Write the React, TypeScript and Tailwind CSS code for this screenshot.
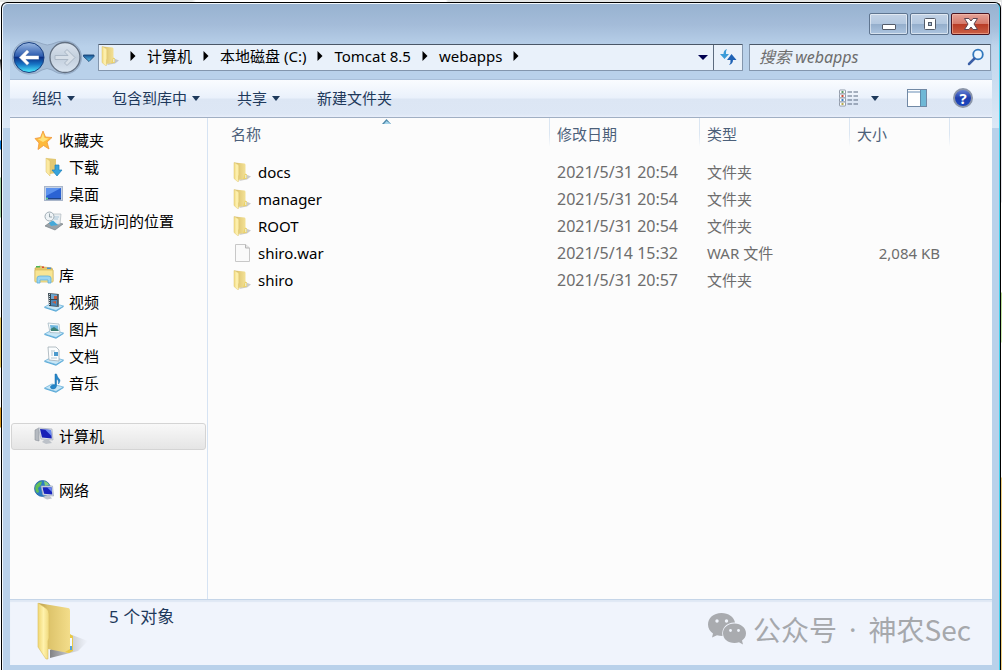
import type { ReactNode } from 'react';

const LargeFolderIcon = () => (
  <svg viewBox="0 0 54 58" className="w-[54px] h-[58px] mt-[2px]">
    <defs>
      <linearGradient id="folderBack" x1="0" x2="1">
        <stop offset="0" stopColor="#b3964a" />
        <stop offset="0.3" stopColor="#dcc269" />
        <stop offset="1" stopColor="#f3dd8a" />
      </linearGradient>
      <linearGradient id="folderFront" x1="0" x2="1">
        <stop offset="0" stopColor="#f0d774" />
        <stop offset="0.5" stopColor="#fff2ac" />
        <stop offset="1" stopColor="#efd87c" />
      </linearGradient>
      <linearGradient id="folderShade" x1="0" x2="1">
        <stop offset="0" stopColor="#666" stopOpacity="0.8" />
        <stop offset="1" stopColor="#999" stopOpacity="0" />
      </linearGradient>
    </defs>
    <path d="M36 33 L52 39 L42 49 L14 56 L14 48 Z" fill="url(#folderShade)" />
    <path d="M2 1 L32 6 Q34 6 34 9 L34 50 L32 51 L12 47 L10 8 Z" fill="url(#folderBack)" />
    <path d="M34 32 L37 34 L37 49 L33 51 L29 50 L34 47 Z" fill="#e9c947" />
    <path d="M34 36 h2 v12 h-2 Z" fill="#f4fafd" />
    <path d="M34 44 h2 v4 h-2 Z" fill="#58a3d8" />
    <path d="M2 1 L11 7 Q13 9 13 12 L13 36 L12 39 L12 57 L10 57 L2 45 Z" fill="url(#folderFront)" stroke="#dcc060" strokeWidth="0.6" />
  </svg>
);

const FolderIcon = () => (
  <svg viewBox="0 0 18 20" className="w-[18px] h-5 shrink-0">
    <defs>
      <linearGradient id="smallBack" x1="0" x2="1">
        <stop offset="0" stopColor="#c3a75a" />
        <stop offset="0.4" stopColor="#e3cb79" />
        <stop offset="1" stopColor="#f3e196" />
      </linearGradient>
      <linearGradient id="smallFront" x1="0" x2="1">
        <stop offset="0" stopColor="#f1da80" />
        <stop offset="0.6" stopColor="#fff3b4" />
        <stop offset="1" stopColor="#f3e08f" />
      </linearGradient>
    </defs>
    <path d="M12 12 L18 14.500 L14 17.500 L6 19 Z" fill="#8d8d8d" opacity="0.45" />
    <path d="M1 0.500 L11.500 1.500 Q12.500 1.600 12.500 3 V17 L5 18 V3 Z" fill="url(#smallBack)" />
    <path d="M12 11.500 L14 12.500 V16.500 L10 17.500 Z" fill="#ecd268" />
    <path d="M12.300 13 H13.300 V16 H12.300 Z" fill="#e8f2f6" />
    <path d="M1 0.500 L5 2.500 Q6 3 6 4.500 V13 L5.500 14 V19.500 L4.500 19.500 L1 16.500 Z" fill="url(#smallFront)" stroke="#dfc670" strokeWidth="0.500" />
  </svg>
);

const FileIcon = () => (
  <svg viewBox="0 0 18 20" className="w-[18px] h-5 shrink-0">
    <path d="M2.500 1.500 H12.500 L16.500 5 V18.500 H2.500 Z" fill="#fafafa" stroke="#c8c8c8" />
    <path d="M12.500 1.500 V5 H16.500" fill="#e6e6e6" stroke="#b5b5b5" />
  </svg>
);

const StarIcon = () => (
  <svg viewBox="0 0 20 20" className="w-5 h-5">
    <path d="M9 1 L11.500 7 L18 7.500 L13 12 L15 19 L9.500 15.500 L4 19.500 L5 13 L1 8.500 L6.500 7.500 Z" fill="#fdb93c" stroke="#f0953a" strokeWidth="0.8" strokeLinejoin="round" />
    <path d="M9 3 L10.500 8 L15 8.500 L9 12 L3.500 9 L7 8.500 Z" fill="#ffe27a" />
  </svg>
);

const DownloadIcon = () => (
  <svg viewBox="0 0 20 20" className="w-5 h-5">
    <path d="M2 1 L12 2 V16 L6 17 Z" fill="#e2c873" />
    <path d="M2 1 L6 4 V19 L2 15 Z" fill="#fbe9a0" stroke="#d9bf69" strokeWidth="0.5" />
    <path d="M11 8 H15 V13 H18 L13 19 L8 13 H11 Z" fill="#36a3dc" stroke="#1d7fb9" strokeWidth="0.7" />
  </svg>
);

const DesktopIcon = () => (
  <svg viewBox="0 0 20 20" className="w-5 h-5">
    <rect x="0.500" y="2.500" width="18" height="14" fill="#c6d3e6" stroke="#a9b6ca" />
    <rect x="2" y="4" width="15" height="11" fill="#2b63d4" />
    <path d="M2 4 H17 L2 12 Z" fill="#5c92ee" />
    <rect x="2" y="14" width="15" height="1.500" fill="#1d4388" />
    <circle cx="3" cy="14.500" r="1" fill="#6ddf8c" />
  </svg>
);

const RecentIcon = () => (
  <svg viewBox="0 0 20 20" className="w-5 h-5">
    <path d="M1 15 L8 10 L19 13 L11 19 Z" fill="#9aa2a8" stroke="#6c757b" strokeWidth="0.6" />
    <path d="M7 3 H17 L16 13 L8 14 Z" fill="#e9eef1" stroke="#b0b9be" strokeWidth="0.7" />
    <path d="M5 12 L9 9.500 L14 14 L7 15 Z" fill="#45a9d9" />
    <path d="M10 6 H15 M10 8 H14" stroke="#a9c7da" />
    <circle cx="5.500" cy="5.500" r="4.500" fill="#eef3f6" stroke="#a0adb5" />
    <path d="M5.500 2.500 V6 H8" fill="none" stroke="#809099" strokeWidth="0.8" />
  </svg>
);

const LibraryIcon = () => (
  <svg viewBox="0 0 20 20" className="w-5 h-5">
    <path d="M1 3 L6 1 L10 2 L18 3 L19 6 V16 H1 Z" fill="#e5c767" stroke="#c3a24a" strokeWidth="0.6" />
    <rect x="2" y="1" width="4" height="1.500" fill="#4eb556" />
    <rect x="8" y="1.500" width="2" height="1.500" fill="#dc4936" />
    <rect x="13" y="2.500" width="4" height="1.500" fill="#4b91d2" />
    <path d="M1 5 H19 V17 H1 Z" fill="#f8e594" stroke="#d6ba5d" strokeWidth="0.7" />
    <path d="M3 18 V13 Q3 11 6 11 H14 Q17 11 17 13 V18 H14 V15 H6 V18 Z" fill="#9bd5f2" stroke="#5eaedb" strokeWidth="0.8" />
  </svg>
);

// Shared light blue tray under each library item
const Tray = ({ children }: { children: ReactNode }) => (
  <svg viewBox="0 0 20 20" className="w-5 h-5">
    <path d="M0.500 15 L8 11 L19.500 14 L12 18.500 Z" fill="#c8e7f7" stroke="#6fb4da" strokeWidth="0.8" />
    <path d="M0.500 15 L12 18.500 L19.500 14 V15 L12 19.800 L0.500 16 Z" fill="#5cabd8" />
    {children}
  </svg>
);

const VideoIcon = () => (
  <Tray>
    <path d="M4 1 L15 2 V15 L5 14 Z" fill="#36454f" />
    <path d="M7 2 L13 2.500 V7 L7 7 Z" fill="#6fa9d3" />
    <path d="M7 8 H13 V14 L7 13.500 Z" fill="#4989ba" />
    <path d="M10 4 L13 4 V7 H10 Z M8 10 L12 9 V12 Z" fill="#c75b3c" />
    <path d="M5.500 2 V14 M14.200 2.500 V15" stroke="#dce4e8" strokeWidth="0.9" strokeDasharray="1 1" />
  </Tray>
);

const PictureIcon = () => (
  <Tray>
    <path d="M4 4 L15 5 L16 14 L6 13.500 Z" fill="#f5fafc" stroke="#9cb1bd" strokeWidth="0.7" />
    <path d="M6 6 L14 6.500 L14.500 12 L7 12 Z" fill="#6fb7df" />
    <path d="M6.500 10 L10 8 L14.500 11 V12 H7 Z" fill="#3b8075" />
  </Tray>
);

const DocumentIcon = () => (
  <Tray>
    <path d="M4 1 H12 L15 4 V15 L5 14 Z" fill="#fbfdfe" stroke="#a1adb5" strokeWidth="0.8" />
    <path d="M7 5 H11 M7 7 H9 M7 9 H9 M7 12 H13" stroke="#b4c6d1" />
    <rect x="10" y="6" width="4" height="4" fill="#4c9acd" />
  </Tray>
);

const MusicIcon = () => (
  <Tray>
    <path d="M11 1 H12.500 Q13 4 16 7 Q16 9 14.500 11 Q15 7 12.500 6 V13 Q12 16 9 16 Q6 15.500 6.500 13.500 Q8 11 11 12 Z" fill="#2587c9" stroke="#1769a8" strokeWidth="0.5" />
  </Tray>
);

const ComputerIcon = () => (
  <svg viewBox="0 0 20 20" className="w-5 h-5">
    <path d="M1 4 L5 2 V15 L1 14 Z" fill="#b4b9c0" stroke="#8b9199" strokeWidth="0.6" />
    <path d="M4.500 2 L18 3 L19 14 L7 13 Z" fill="#dce0e8" stroke="#a6adb9" strokeWidth="0.7" />
    <path d="M6 3 L17 4 L17.800 12.500 L8 11.500 Z" fill="#1720b7" />
    <path d="M11 3.500 L17 4 L17.500 10 Z" fill="#6a8af0" />
    <path d="M10 14 H15 L18 17 L12 18 L8 16 Z" fill="#bcc1c8" />
  </svg>
);

const NetworkIcon = () => (
  <svg viewBox="0 0 20 20" className="w-5 h-5">
    <circle cx="8.500" cy="8.500" r="8" fill="#2c7cc4" stroke="#24619b" strokeWidth="0.7" />
    <path d="M2 5 Q5 1 8 1.500 L7 5 L4 8 L5 12 L3 13 Q0 9 2 5 Z" fill="#62bf57" />
    <path d="M10 1 Q14 2 15 5 L11 6 Z" fill="#84d078" />
    <path d="M7 6 L18.500 6 L19.500 16 L9 15 Z" fill="#dbe0ea" stroke="#9ea7b7" strokeWidth="0.7" />
    <path d="M8.500 7.200 L17.500 7.200 L18.300 14.500 L10 13.800 Z" fill="#1a25bd" />
    <path d="M13 7.200 H17.500 L18 12 Z" fill="#6887ee" />
    <path d="M12 16 H16 L18 18.500 L13 19.500 L9 17.500 Z" fill="#c2c7ce" />
  </svg>
);

const NavButtons = () => (
  <div className="flex items-center relative w-[84px] h-9 shrink-0">
    <svg viewBox="0 0 84 36" className="absolute inset-0 w-[84px] h-9">
      <defs>
        <linearGradient id="navBack" x1="0" y1="0" x2="0" y2="1">
          <stop offset="0" stopColor="#9cb9e2" />
          <stop offset="0.45" stopColor="#2c5cb0" />
          <stop offset="0.5" stopColor="#0b2f86" />
          <stop offset="0.72" stopColor="#1673c4" />
          <stop offset="1" stopColor="#4ff0ff" />
        </linearGradient>
        <linearGradient id="navForward" x1="0" y1="0" x2="0" y2="1">
          <stop offset="0" stopColor="#dbe4ee" />
          <stop offset="0.5" stopColor="#c3cfdd" />
          <stop offset="1" stopColor="#d9e4f0" />
        </linearGradient>
        <linearGradient id="navDown" x1="0" y1="0" x2="0" y2="1">
          <stop offset="0" stopColor="#174f93" />
          <stop offset="1" stopColor="#59c9ef" />
        </linearGradient>
      </defs>
      <path d="M17 2 Q25 2 31 5 Q35 7 40 5 Q46 2 53 2 A16 16 0 0 1 53 35 Q45 35 40 31 Q35 28 30 31 Q25 35 17 35 A16 16 0 0 1 17 2 Z" fill="#a5bcd6" stroke="#93a9c4" />
      <circle cx="17" cy="18.500" r="15" fill="url(#navBack)" stroke="#183e80" />
      <path d="M7 18.500 L15 10.500 L17.500 13 L14 16.500 H27 V20.500 H14 L17.500 24 L15 26.500 Z" fill="#fff" stroke="#2a5499" strokeWidth="0.5" strokeLinejoin="round" />
      <circle cx="53" cy="18.500" r="15" fill="url(#navForward)" stroke="#626f80" strokeWidth="1.300" />
      <path d="M63 18.500 L55 10.500 L52.500 13 L56 16.500 H43 V20.500 H56 L52.500 24 L55 26.500 Z" fill="#d8e0e9" stroke="#aab7c6" strokeLinejoin="round" />
      <path d="M71.500 16 H82 V17.500 L77 22.500 L71.500 17.500 Z" fill="url(#navDown)" stroke="#1c4777" strokeWidth="0.900" />
    </svg>
    <button aria-label="后退" className="relative w-8 h-9 rounded-full" />
    <button aria-label="前进" className="relative w-9 h-9 rounded-full" />
    <button aria-label="最近的页面" className="relative w-4 h-9" />
  </div>
);

const Crumb = ({ label }: { label: string }) => (
  <>
    <svg viewBox="0 0 6 10" className="w-[6px] h-[10px] shrink-0">
      <path d="M0.500 0 L5.500 5 L0.500 10 Z" fill="#000" />
    </svg>
    {label && <button className="whitespace-nowrap">{label}</button>}
  </>
);

const DownArrow = () => (
  <svg viewBox="0 0 8 5" className="w-2 h-[5px]">
    <path d="M0 0 H8 L4 5 Z" fill="#1e395b" />
  </svg>
);

const WeChatLogo = () => (
  <svg viewBox="0 0 40 34" className="w-10 h-[34px]">
    <path d="M14.500 1 C6.500 1 1 6 1 12.500 C1 16.500 3 19.500 6 21.500 L5 25.500 L10 23.300 Q12.500 24 15.500 24 C14 15 21 10 28 10.500 C27 5 21.500 1 14.500 1 Z" fill="#a9abaf" />
    <path d="M27.500 11.500 C20.500 11.500 16 16 16 21.200 C16 27 21 31 27.500 31 Q30 31 32 30.300 L36 32.500 L35 28.500 C37.500 26.800 39 24.200 39 21.200 C39 16 34 11.500 27.500 11.500 Z" fill="#a9abaf" />
    <g fill="#f0f4fc">
      <circle cx="10" cy="9" r="1.700" />
      <circle cx="19.500" cy="9" r="1.700" />
      <circle cx="23.500" cy="18.500" r="1.400" />
      <circle cx="31.500" cy="18.500" r="1.400" />
    </g>
  </svg>
);

const places = [
  {
    title: '收藏夹',
    icon: <StarIcon />,
    children: [
      { title: '下载', icon: <DownloadIcon /> },
      { title: '桌面', icon: <DesktopIcon /> },
      { title: '最近访问的位置', icon: <RecentIcon /> },
    ],
  },
  {
    title: '库',
    icon: <LibraryIcon />,
    children: [
      { title: '视频', icon: <VideoIcon /> },
      { title: '图片', icon: <PictureIcon /> },
      { title: '文档', icon: <DocumentIcon /> },
      { title: '音乐', icon: <MusicIcon /> },
    ],
  },
  { title: '计算机', icon: <ComputerIcon />, selected: true, children: [] },
  { title: '网络', icon: <NetworkIcon />, children: [] },
];

const files = [
  { name: 'docs', date: '2021/5/31 20:54', type: '文件夹', size: '' },
  { name: 'manager', date: '2021/5/31 20:54', type: '文件夹', size: '' },
  { name: 'ROOT', date: '2021/5/31 20:54', type: '文件夹', size: '' },
  { name: 'shiro.war', date: '2021/5/14 15:32', type: 'WAR 文件', size: '2,084 KB' },
  { name: 'shiro', date: '2021/5/31 20:57', type: '文件夹', size: '' },
];

const columns = ['修改日期', '类型', '大小'];

const menus = [
  { label: '组织', arrow: true },
  { label: '包含到库中', arrow: true },
  { label: '共享', arrow: true },
  { label: '新建文件夹', arrow: false },
];

const windowButton =
  'w-[39px] h-[22px] flex items-center justify-center rounded-[2px] border border-[#5f7590] shadow-[inset_0_0_0_1px_rgba(255,255,255,0.5)] bg-[linear-gradient(#c3d3e6_0%,#b4c8e0_48%,#93adcb_50%,#adc5e0_100%)]';

const TitleBar = () => (
  <div className="flex justify-end gap-[2px] pt-[10px] pr-[2px]">
    <button aria-label="最小化" className={windowButton}>
      <svg viewBox="0 0 14 14" className="w-[14px] h-[14px]">
        <rect x="0.500" y="7.500" width="13" height="5" rx="0.500" fill="#fff" stroke="#535b69" />
      </svg>
    </button>
    <button aria-label="最大化" className={windowButton}>
      <svg viewBox="0 0 14 14" className="w-[14px] h-[14px]">
        <rect x="1.500" y="1.500" width="11" height="11" rx="1" fill="#fff" stroke="#535b69" />
        <rect x="5.500" y="5.500" width="3" height="3" fill="#a9bfd8" stroke="#535b69" />
      </svg>
    </button>
    <button
      aria-label="关闭"
      className="w-[39px] h-[22px] flex items-center justify-center rounded-[2px] border border-[#4a1420] shadow-[inset_0_0_0_1px_rgba(255,200,180,0.5)] bg-[linear-gradient(#e5a399_0%,#d67b6c_48%,#b83a25_50%,#cb5f45_100%)]"
    >
      <svg viewBox="0 0 14 12" className="w-[14px] h-3">
        <path d="M0.500 0.500 H5 L7 3 L9 0.500 H13.500 L10 6 L13.500 11.500 H9 L7 9 L5 11.500 H0.500 L4 6 Z" fill="#fff" stroke="#5d4450" strokeLinejoin="round" />
      </svg>
    </button>
  </div>
);

const AddressRow = () => (
  <div className="flex items-center my-1 h-9 pl-[2px] pr-px">
    <NavButtons />
    <div className="flex-1 min-w-0 h-[27px] ml-[2px] flex border border-[#8396ad] border-t-[#4a5767] rounded-[1px] bg-[#e9f1fa]">
      <div className="flex-1 min-w-0 flex items-center gap-[11px] pl-[2px] pb-[2px]">
        <FolderIcon />
        <Crumb label="计算机" />
        <Crumb label="本地磁盘 (C:)" />
        <Crumb label="Tomcat 8.5" />
        <Crumb label="webapps" />
        <Crumb label="" />
      </div>
      <button aria-label="以前的位置" className="w-5 flex items-center justify-center">
        <svg viewBox="0 0 10 5" className="w-[10px] h-[5px]">
          <path d="M0 0 H10 L5 5 Z" fill="#000050" />
        </svg>
      </button>
      <button aria-label="刷新" className="w-[29px] flex items-center justify-center border-l border-[#5c6b7e]">
        <svg viewBox="0 0 18 18" className="w-[18px] h-[18px]">
          <path d="M8 1 Q4.500 2 4.500 6 H1 L5.500 11 L10 6 H7 Q6.500 3 8 1 Z" fill="#3a9bd8" />
          <path d="M10 17 Q14 16 14 12 H17.500 L12.500 6 L8 12 H11.500 Q12 15 10 17 Z" fill="#1f62b5" />
        </svg>
      </button>
    </div>
    <div className="w-[242px] h-[27px] ml-[6px] flex items-center border border-[#8396ad] border-t-[#4a5767] rounded-[1px] bg-[#e9f1fa] pl-[9px] pr-[5px]">
      <input
        type="text"
        aria-label="搜索 webapps"
        placeholder="搜索 webapps"
        className="flex-1 min-w-0 bg-transparent outline-none italic text-[16px] leading-5 placeholder:text-[#6d6d6d]"
      />
      <svg viewBox="0 0 18 18" className="w-[18px] h-[18px]">
        <circle cx="11" cy="6.500" r="4.800" fill="#f0f8fe" stroke="#3178bd" strokeWidth="1.800" />
        <path d="M7.500 10.500 L2 16" stroke="#3a5fa6" strokeWidth="2.500" strokeLinecap="round" />
      </svg>
    </div>
  </div>
);

const Toolbar = () => (
  <div className="flex items-center h-[39px] pb-px pl-[22px] pr-[19px] border-t border-t-[#a9bfd9] border-b border-b-[#a0afc3] bg-[linear-gradient(#fafcff_0%,#eaf1fb_48%,#dce6f4_52%,#dde7f5_92%,#e8eefa_100%)] text-[#1e395b]">
    <div className="flex gap-[37px]">
      {menus.map((menu) => (
        <button key={menu.label} className="flex items-center gap-[5px] whitespace-nowrap">
          {menu.label}
          {menu.arrow && <DownArrow />}
        </button>
      ))}
    </div>
    <div className="ml-auto flex items-center">
      <button aria-label="更改您的视图" className="flex items-center gap-3">
        <svg viewBox="0 0 20 18" className="w-5 h-[18px]">
          {['#5c9a67', '#cc4b37', '#3c80c5', '#b5ab4d'].map((color, i) => (
            <g key={color} transform={`translate(0 ${i * 4})`}>
              <rect x="0.500" y="1" width="6" height="4" rx="0.500" fill="#fff" stroke="#8791a0" strokeWidth="0.900" />
              <rect x="2.500" y="2" width="2" height="2" fill={color} />
              <path d="M8.500 3 H13 M14.500 3 H19" stroke="#5a6a80" strokeWidth="1.200" />
            </g>
          ))}
        </svg>
        <DownArrow />
      </button>
      <button aria-label="显示预览窗格" className="ml-7">
        <svg viewBox="0 0 20 18" className="w-5 h-[18px]">
          <rect x="0.500" y="0.500" width="19" height="17" fill="#fff" stroke="#7189a5" />
          <path d="M1 3 H14" stroke="#b3c6da" strokeWidth="2" />
          <rect x="14" y="1" width="5" height="16" fill="#6fb8d6" />
          <path d="M13.500 1 V17" stroke="#5d8bab" />
        </svg>
      </button>
      <button
        aria-label="获取帮助"
        className="ml-[26px] w-5 h-5 rounded-full border-2 border-[#8b95a9] bg-[linear-gradient(#6681d3_0%,#1f3fae_50%,#1a46c0_100%)] text-white text-[15px] font-bold leading-4 flex items-center justify-center"
      >
        ?
      </button>
    </div>
  </div>
);

const Sidebar = () => (
  <nav className="w-[198px] shrink-0 border-r border-[#d6e3f3] pt-[9px] px-px">
    {places.map((place) => (
      <ul key={place.title} className="mb-[27px]">
        <li>
          <a
            href="#"
            className={
              place.selected
                ? 'flex items-center h-[27px] gap-[5px] pl-[22px] pb-[2px] -mt-px mb-px rounded-[3px] border border-[#d4d4d4] bg-[linear-gradient(#f8f8f8,#e5e5e5)]'
                : 'flex items-center h-[27px] gap-[5px] pl-[23px] pb-[2px]'
            }
          >
            {place.icon}
            {place.title}
          </a>
        </li>
        {place.children.map((child) => (
          <li key={child.title}>
            <a href="#" className="flex items-center h-[27px] gap-[5px] pl-[33px] pb-[2px]">
              {child.icon}
              {child.title}
            </a>
          </li>
        ))}
      </ul>
    ))}
  </nav>
);

const FileList = () => (
  <div className="flex-1 min-w-0">
    <table className="w-full table-fixed text-left text-[#6d6d6d]">
      <colgroup>
        <col className="w-[341px]" />
        <col className="w-[150px]" />
        <col className="w-[150px]" />
        <col className="w-[100px]" />
        <col />
      </colgroup>
      <thead>
        <tr className="h-10 align-top text-[#4c607a]">
          <th className="relative p-0 font-normal">
            <div className="h-8 flex items-center pl-[23px]">名称</div>
            <svg viewBox="0 0 9 5" className="absolute top-[1px] left-[174px] w-[9px] h-[5px]">
              <path d="M0 5 L4.500 0 L9 5 Z" fill="#4f89aa" />
              <path d="M2 5 L4.500 2 L9 5 Z" fill="#a5d5ec" />
            </svg>
          </th>
          {columns.map((column) => (
            <th key={column} className="p-0 font-normal">
              <div className="h-8 flex items-center">
                <span className="w-px h-full mr-[7px] bg-[linear-gradient(#dbe6f2_50%,#fcfcfc_90%)]" />
                {column}
              </div>
            </th>
          ))}
          <td className="p-0">
            <div className="w-px h-8 bg-[linear-gradient(#dbe6f2_50%,#fcfcfc_90%)]" />
          </td>
        </tr>
      </thead>
      <tbody>
        {files.map((file) => (
          <tr key={file.name} className="h-[27px]">
            <td className="p-0 pl-[25px]">
              <div className="flex items-center gap-[7px] text-black">
                {file.size ? <FileIcon /> : <FolderIcon />}
                {file.name}
              </div>
            </td>
            <td className="p-0 pl-2 text-[16px] leading-5">{file.date}</td>
            <td className="p-0 pl-2">{file.type}</td>
            <td className="p-0 pr-[9px] text-right">{file.size}</td>
            <td />
          </tr>
        ))}
      </tbody>
    </table>
  </div>
);

const DetailsPane = () => (
  <footer className="flex h-[66px] pl-[26px] pr-[21px] border-t border-[#c5d5e8] bg-[#f0f4fc] shadow-[inset_0_2px_1px_#dfe8f4]">
    <LargeFolderIcon />
    <p className="ml-[19px] mt-[5px] text-[17px] leading-6 text-[#1e395b]">5 个对象</p>
    <div className="ml-auto flex items-center gap-[6px] pb-2 text-[28px] leading-8 text-[#a6a8ac] font-['Noto_Sans_CJK_SC',sans-serif]">
      <WeChatLogo />
      <div className="flex gap-3">
        <span>公众号</span>
        <span className="font-['Noto_Sans',sans-serif]">·</span>
        <span>神农Sec</span>
      </div>
    </div>
  </footer>
);

const App = () => {
  return (
    <div className="min-h-screen flex flex-col bg-white font-['Noto_Sans','Noto_Sans_CJK_SC',sans-serif] text-[15px] leading-5 text-black">
      <div className="h-[2px] bg-[linear-gradient(90deg,#e6e8e6_192px,#fff_196px,#fff_446px,#e4e6e6_448px)]" />
      <div className="flex-1 flex">
        <div className="w-px bg-[linear-gradient(#fff_57px,#333_58px,#fff_70px,#fff_138px,#0878d8_139px,#0878d8_147px,#fff_148px,#fff_175px,#a5d5a5_176px,#a5d5a5_215px,#fff_216px,#fff_315px,#e8c860_316px,#e8c860_365px,#fff_366px,#fff_405px,#d89820_406px,#d89820_425px,#fff_426px)]" />
        <div className="flex-1 min-w-0 flex flex-col border border-b-0 border-black rounded-t-[6px] px-2 pb-[5px] shadow-[inset_1px_1px_0_#f2f8fd,inset_-1px_0_0_#45d2ee] [background:linear-gradient(#dce8f600,#dce8f6)_1px_28px/7px_97px_no-repeat,linear-gradient(#dce8f600,#dce8f6)_calc(100%_-_1px)_28px/7px_97px_no-repeat,linear-gradient(#97b2d0,#a4bcd9_22px,#b9d1ea_44px)]">
          <TitleBar />
          <AddressRow />
          <Toolbar />
          <div className="flex-1 flex bg-[#fcfcfc]">
            <Sidebar />
            <FileList />
          </div>
          <DetailsPane />
        </div>
        <div className="w-px bg-[linear-gradient(#e4e4ea_200px,#fff_201px,#fff_290px,#b8dc90_291px,#d0f0b8_340px,#fff_341px,#fff_475px,#f0d080_476px)]" />
      </div>
    </div>
  );
};

export default App;
